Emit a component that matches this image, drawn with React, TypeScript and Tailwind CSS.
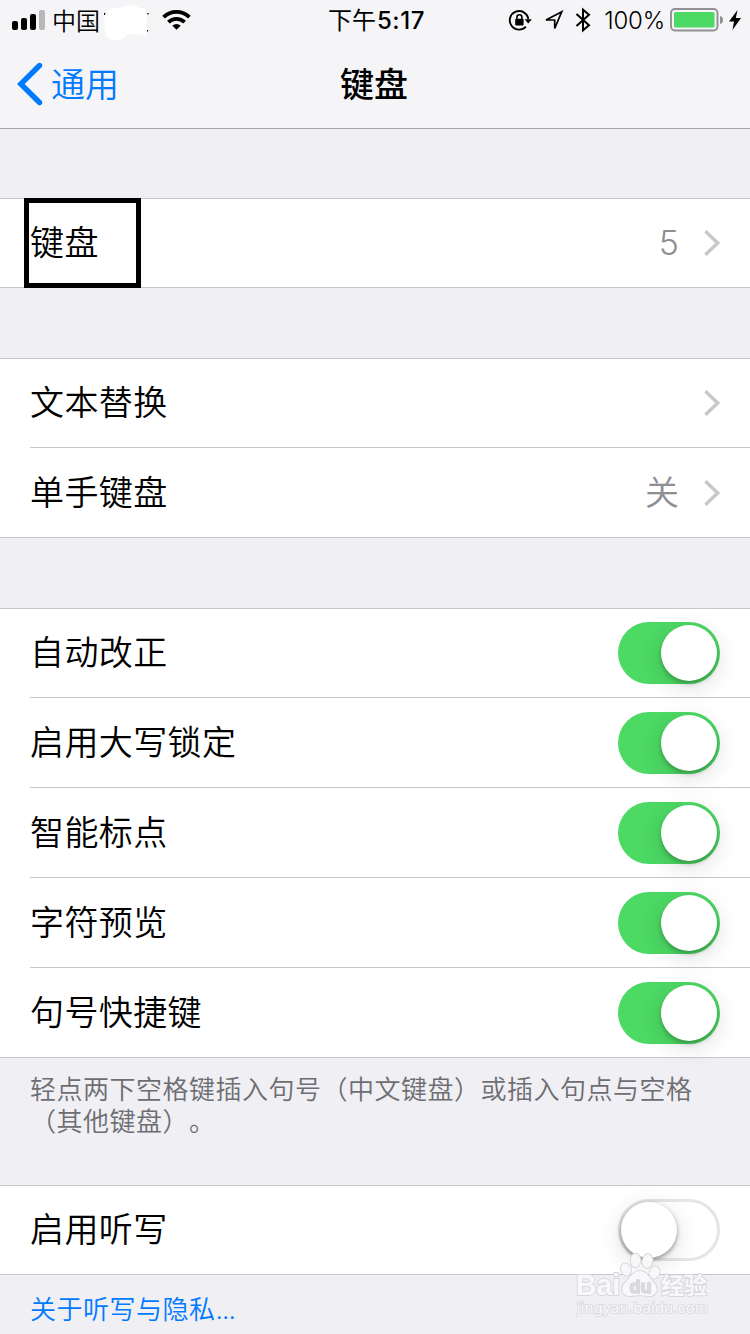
import type { ReactNode } from 'react';

const textFont = "font-['Inter','Noto_Sans_CJK_SC',sans-serif]";

function Chevron() {
  return (
    <svg className="-mr-px ml-[22px] h-[28px] w-[20px] shrink-0" viewBox="0 0 20 28" fill="none" stroke="#c7c7cc" strokeWidth="3.4">
      <path d="M4.400 2.200 16.700 14 4.400 25.800" />
    </svg>
  );
}

function Toggle({ on }: { on: boolean }) {
  return (
    <span
      className={
        on
          ? 'flex h-[62px] w-[102px] items-center justify-end rounded-full bg-[#4cd964] px-[3px]'
          : 'flex h-[62px] w-[102px] items-center rounded-full border-[3px] border-[#e5e5e5] bg-white'
      }
    >
      <span
        className={
          on
            ? 'h-[56px] w-[56px] rounded-full bg-white shadow-[0_3px_4px_rgba(0,0,0,0.22),0_6px_24px_rgba(0,0,0,0.14)]'
            : 'h-[56px] w-[56px] rounded-full bg-white shadow-[0_2px_4px_rgba(0,0,0,0.38),0_6px_24px_rgba(0,0,0,0.14)]'
        }
      />
    </span>
  );
}

function Row({ label, first, children }: { label: string; first?: boolean; children: ReactNode }) {
  return (
    <div
      className={
        first
          ? 'ml-[30px] flex h-[88px] items-center justify-between pr-[30px]'
          : 'ml-[30px] flex h-[90px] items-center justify-between border-t border-[#c8c7cc] pt-px pr-[30px]'
      }
    >
      <span className="text-[34px] leading-[50px] font-[350] tracking-[0.4px]">{label}</span>
      <span className="flex items-center">{children}</span>
    </div>
  );
}

function Section({ children }: { children: ReactNode }) {
  return <section className="relative border-y border-[#c8c7cc] bg-white">{children}</section>;
}

function Value({ children }: { children: ReactNode }) {
  return <span className="text-[34px] leading-[50px] font-[350] text-[#8e8e93]">{children}</span>;
}

function StatusBar() {
  return (
    <div className="flex h-[40px] items-center">
      <div className="flex flex-1 items-center pl-[12px]">
        <svg className="h-[20px] w-[33px]" viewBox="0 0 33 20">
          <rect x="0" y="11" width="6" height="9" rx="2" />
          <rect x="9" y="8" width="6" height="12" rx="2" />
          <rect x="18" y="4" width="6" height="16" rx="2" />
          <rect x="27" y="0" width="6" height="20" rx="2" fill="#b8b8ba" />
        </svg>
        <span className="ml-[7px] pt-[3px] text-[24px] leading-[37px] font-[350]">中国</span>
        <svg className="ml-[3px] h-[40px] w-[48px]" viewBox="0 0 48 40">
          <path d="M1 13h3v2H1zM43.500 30h1.500v1.500h-1.500zM44 13h1.500v1.500h-1.500z" />
          <path
            fill="#fff"
            d="M2 14C8 6 12 9 20 7C26 4 34 5 36 8C45 7 45 14 44 20C43 25 45 29 43 36C36 34 29 33 24 35C20 41 12 41 6 39C0 34 3 27 1 24Z"
          />
        </svg>
        <svg className="ml-[11px] h-[22px] w-[29px]" viewBox="0 0 29 22" fill="none" stroke="#000" strokeWidth="3.800">
          <path d="M1.600 8.200a18.300 18.300 0 0 1 25.800 0" />
          <path d="M6.400 13.200a11.600 11.600 0 0 1 16.200 0" />
          <path d="M10.300 16.700a6.200 6.200 0 0 1 8.400 0L14.500 20.800Z" fill="#000" stroke="none" />
        </svg>
      </div>
      <span className="pt-[2px] text-[24px] leading-[38px]">
        下午<span className="ml-px font-[550] tracking-[0.6px]">5:17</span>
      </span>
      <div className="flex flex-1 items-center justify-end pr-[9px]">
        <svg className="h-[24px] w-[24px]" viewBox="0 0 24 24" fill="none" stroke="#000" strokeWidth="1.900">
          <path d="M17.900 18.700A9.300 9.300 0 1 1 20.300 11" />
          <path d="M16.600 11.200h7.200l-3.600 4.300z" fill="#000" stroke="none" />
          <rect x="7.200" y="10.800" width="8.400" height="6.700" rx="1" fill="#000" stroke="none" />
          <path d="M8.900 11V9.200a2.500 2.500 0 0 1 5 0V11" strokeWidth="1.600" />
        </svg>
        <svg className="ml-[12px] h-[22px] w-[20px]" viewBox="0 0 20 22" fill="none" stroke="#000" strokeWidth="1.700">
          <path d="M17.800 2.700 2 11h8.700v8.500Z" strokeLinejoin="miter" />
        </svg>
        <svg className="ml-[11px] h-[26px] w-[16px]" viewBox="0 0 16 26" fill="none" stroke="#000" strokeWidth="2">
          <path d="M1.500 7 14 18.300 8 23.300V2.700l6 5L1.500 19" />
        </svg>
        <span className="ml-[13px] pt-[2px] text-[24px] leading-[38px] font-[350] tracking-[-0.2px]">100%</span>
        <svg className="ml-[5px] h-[24px] w-[53px]" viewBox="0 0 53 24">
          <rect x="1" y="1" width="46.500" height="21.500" rx="4" fill="none" stroke="#929294" strokeWidth="1.900" />
          <rect x="4" y="4" width="40.500" height="15.500" rx="1.500" fill="#4cd964" />
          <path d="M50 8q3 .5 3 4t-3 4z" fill="#929294" />
        </svg>
        <svg className="ml-[6px] h-[20px] w-[12px]" viewBox="0 0 12 20">
          <path d="M8.500 0 0 11.500h5L3.500 20 12 8H6.800Z" />
        </svg>
      </div>
    </div>
  );
}

function Watermark() {
  return (
    <svg
      className="absolute top-[1250px] left-[570px] h-[72px] w-[150px]"
      viewBox="0 0 150 72"
      fill="#f8f8fa"
      stroke="#d8d8dc"
      strokeWidth="2"
      paintOrder="stroke"
      strokeLinejoin="round"
      fontFamily="'Liberation Sans','Noto Sans CJK SC',sans-serif"
    >
      <ellipse cx="56" cy="19.500" rx="4.800" ry="6" transform="rotate(-20 56 19.500)" />
      <ellipse cx="65.500" cy="10.500" rx="4.800" ry="6.800" />
      <ellipse cx="77.500" cy="11" rx="4.800" ry="6.800" transform="rotate(8 77.500 11)" />
      <ellipse cx="84.500" cy="22.500" rx="4.800" ry="6" transform="rotate(20 84.500 22.500)" />
      <path d="M70 21c7 0 9 7 14 12 6 6 1 14-5 13-6-1-12-1-18 0-8 1-12-7-6-13 6-6 8-12 15-12Z" />
      <text x="6" y="45" fontSize="30" fontWeight="700" textLength="44" lengthAdjust="spacingAndGlyphs">Bai</text>
      <text x="59.500" y="43" fontSize="18" fontWeight="700" textLength="22" lengthAdjust="spacingAndGlyphs" fill="#dcdce0" stroke="#c6c6ca" strokeWidth="1">du</text>
      <text x="91" y="44" fontSize="23" fontWeight="700" textLength="46">经验</text>
      <text x="7" y="63" fontSize="15.500" textLength="131" strokeWidth="1.600">jingyan.baidu.com</text>
    </svg>
  );
}

export default function App() {
  return (
    <div className={`relative h-[1334px] w-[750px] overflow-hidden bg-[#efeff4] text-black ${textFont}`}>
      <header className="h-[129px] border-b border-[#a7a7ab] bg-[#f5f5f7]">
        <StatusBar />
        <div className="grid h-[88px] grid-cols-3 items-center">
          <a className="flex items-center pl-[17px] text-[#007aff]">
            <svg className="h-[44px] w-[26px]" viewBox="0 0 26 44" fill="none" stroke="#007aff" strokeWidth="5.400" strokeLinecap="round">
              <path d="M22.500 3.500 3.800 22l18.700 18.500" />
            </svg>
            <span className="ml-[8px] pt-[2px] text-[34px] leading-[50px] font-[350]">通用</span>
          </a>
          <h1 className="pt-[2px] pr-[2px] text-center text-[34px] leading-[50px] font-medium">键盘</h1>
        </div>
      </header>

      <main>
        <div className="mt-[69px]">
          <Section>
            <Row label="键盘" first>
              <Value>5</Value>
              <Chevron />
            </Row>
            <div className="absolute -top-px left-[24px] h-[90px] w-[117px] border-[5px] border-black" />
          </Section>
        </div>

        <div className="mt-[70px]">
          <Section>
            <Row label="文本替换" first>
              <Chevron />
            </Row>
            <Row label="单手键盘">
              <Value>关</Value>
              <Chevron />
            </Row>
          </Section>
        </div>

        <div className="mt-[70px]">
          <Section>
            <Row label="自动改正" first><Toggle on /></Row>
            <Row label="启用大写锁定"><Toggle on /></Row>
            <Row label="智能标点"><Toggle on /></Row>
            <Row label="字符预览"><Toggle on /></Row>
            <Row label="句号快捷键"><Toggle on /></Row>
          </Section>
          <p className="h-[127px] pt-[16px] pl-[30px] text-[26px] leading-[32px] font-[350] tracking-[0.5px] whitespace-nowrap text-[#6d6d72] [text-spacing-trim:space-all]">
            轻点两下空格键插入句号（中文键盘）或插入句点与空格
            <br />
            （其他键盘）。
          </p>
        </div>

        <Section>
          <Row label="启用听写" first><Toggle on={false} /></Row>
        </Section>
        <a className="block pt-[19px] pl-[30px] text-[26px] leading-[32px] font-[350] tracking-[0.5px] text-[#007aff]">
          关于听写与隐私<span className="tracking-[-0.9px]">...</span>
        </a>
      </main>
      <Watermark />
    </div>
  );
}
